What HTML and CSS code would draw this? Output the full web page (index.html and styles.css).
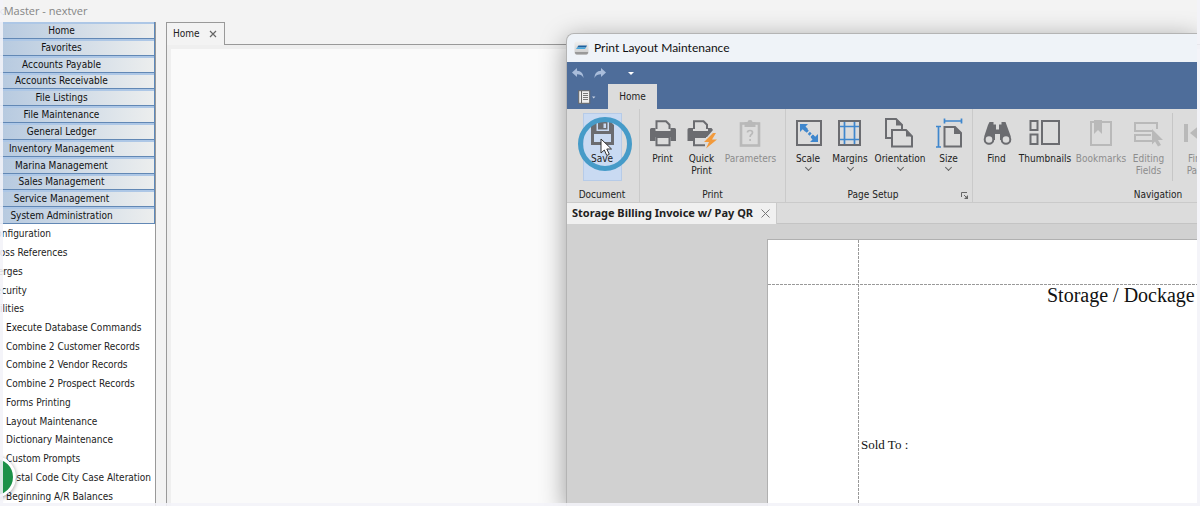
FILE: index.html
```html
<!DOCTYPE html>
<html lang="en">
<head>
<meta charset="utf-8">
<title>DockMaster - nextver</title>
<link rel="stylesheet" href="styles.css">
</head>
<body>
<div class="desktop">
  <header class="app-title">DockMaster - nextver</header>
  <div class="app-body">
    <aside class="sidebar">
      <nav class="menu">
        <button>Home</button><button>Favorites</button><button>Accounts Payable</button><button>Accounts Receivable</button><button>File Listings</button><button>File Maintenance</button><button>General Ledger</button><button>Inventory Management</button><button>Marina Management</button><button>Sales Management</button><button>Service Management</button><button>System Administration</button>
      </nav>
      <ul class="tree">
        <li>Configuration</li><li>Cross References</li><li>Merges</li><li>Security</li><li>Utilities</li>
        <li class="child">Execute Database Commands</li><li class="child">Combine 2 Customer Records</li><li class="child">Combine 2 Vendor Records</li><li class="child">Combine 2 Prospect Records</li><li class="child">Forms Printing</li><li class="child">Layout Maintenance</li><li class="child">Dictionary Maintenance</li><li class="child">Custom Prompts</li><li class="child">Postal Code City Case Alteration</li><li class="child">Beginning A/R Balances</li>
      </ul>
    </aside>
    <main class="workspace">
      <div class="tabs">
        <div class="tab">Home <button class="close" aria-label="Close Home"><svg width="8" height="8" viewBox="0 0 8 8"><path d="M1 1l6 6M7 1l-6 6" stroke="#666" stroke-width="1.2"/></svg></button></div>
        <div class="tab-rest"></div>
      </div>
      <div class="canvas"></div>
    </main>
  </div>
  <div class="badge"></div>

  <section class="window">
    <div class="win-title">
      <svg width="15" height="14" viewBox="0 0 15 14"><defs><linearGradient id="g" x2="0" y2="1"><stop offset="0" stop-color="#f0f0f0"/><stop offset="1" stop-color="#c9c9c9"/></linearGradient></defs><rect x=".5" y=".5" width="14" height="13" rx="2" fill="url(#g)"/><path d="M1 11h13v1q-.5 1.500-2 1.500H3q-1.500 0-2-1.500z" fill="#999"/><path d="M4.500 4.500h8.500l-1 2H3z" fill="#1d5f9e"/><path d="M3 6.500H12L11 8H2z" fill="#48a8dc"/></svg>
      <span>Print Layout Maintenance</span>
    </div>
    <div class="quick">
      <button aria-label="Undo"><svg width="12" height="10" viewBox="0 0 12 10"><path d="M5 0L0 4.500l5 4.500V6.300c3 0 5 .7 6.500 3.700C11.500 5.500 9 2.900 5 2.700z" fill="#a9bddb"/></svg></button>
      <button aria-label="Redo"><svg width="12" height="10" viewBox="0 0 12 10"><path d="M7 0l5 4.500L7 9V6.300C4 6.300 2 7 .5 10 .5 5.500 3 2.900 7 2.700z" fill="#a9bddb"/></svg></button>
      <button class="more" aria-label="Customize"><svg width="12" height="10" viewBox="0 0 12 10"><path d="M3 4h6L6 7z" fill="#fff"/></svg></button>
    </div>
    <div class="ribbon-tabs">
      <button class="file" aria-label="File"><svg width="18" height="14" viewBox="0 0 18 14"><rect x=".7" y=".7" width="11" height="12.600" fill="#eee" stroke="#666" stroke-width="1"/><path d="M3.500 1v12" stroke="#666"/><path d="M5 3.500h5M5 5.500h5M5 7.500h5M5 9.500h5" stroke="#777"/><path d="M14 6.500h3.400l-1.700 2z" fill="#c8d2e2"/></svg></button>
      <button class="ribbon-tab">Home</button>
    </div>
    <div class="ribbon">
      <div class="group document">
        <div class="items">
          <button class="item save"><svg viewBox="0 0 32 32"><path fill-rule="evenodd" d="M5 5h20l3 3v20H5zM8 17v8h17v-8zM10.500 5v9H23V5z" fill="#6b6c70"/><path fill-rule="evenodd" d="M12 5h9.500v7.500H12zM17.500 6.500v4.500h2.500V6.500z" fill="#6b6c70"/></svg>Save</button>
        </div>
        <div class="caption">Document</div>
      </div>
      <div class="group print">
        <div class="items">
          <button class="item"><svg viewBox="0 0 32 32"><path d="M9.500 12V4.200h9.500l3.500 3.500V12" fill="none" stroke="#6b6c70" stroke-width="2"/><path d="M4.500 11H8.500v3h15v-3h4q1.500 0 1.500 1.500V24H23.500v-4H8.500v4H3V12.500Q3 11 4.500 11z" fill="#6b6c70"/><path d="M9.500 20h13v8.300h-13z" fill="#dcdcdc" stroke="#6b6c70" stroke-width="2"/></svg>Print</button>
          <button class="item"><svg viewBox="0 0 32 32"><path d="M8 12V4.200h9.500L21 7.700V12" fill="none" stroke="#6b6c70" stroke-width="2"/><path d="M3 11h4v3h15v-3h3.500l1.500 2-6 7H7v4H1.500V12.500Q1.500 11 3 11z" fill="#6b6c70"/><path d="M20 20H8v8.300h11" fill="none" stroke="#6b6c70" stroke-width="2"/><path d="M27 16l-9 9h5l-3 6.500 11-9h-5l4-6.500z" fill="#f29a3c"/></svg>Quick<br>Print</button>
          <button class="item off" disabled><svg viewBox="0 0 32 32"><rect x="6" y="6.500" width="18" height="22" fill="none" stroke="#b9b9b9" stroke-width="2.600"/><path d="M9.500 5h3q0-2 2.500-2t2.500 2h3v5h-11z" fill="#b9b9b9"/><path d="M12.500 15.500q0-2 2.500-2t2.500 2q0 1.300-1.200 2T15.100 20M15.100 22v2" fill="none" stroke="#b9b9b9" stroke-width="1.700"/></svg>Parameters</button>
        </div>
        <div class="caption">Print</div>
      </div>
      <div class="group setup">
        <div class="items">
          <button class="item"><svg viewBox="0 0 32 32"><rect x="5" y="4" width="24" height="24" fill="none" stroke="#6b6c70" stroke-width="2"/><path d="M8 7h8l-2.500 2.500 2.500 2.500-2.800 2.800-2.500-2.600L8 15zM26 25h-8l2.500-2.500-1.800-2 2.500-2.700 2 2L26 17z" fill="#3f87cd"/><path d="M14 13l8 8" stroke="#3f87cd" stroke-width="3" stroke-dasharray="2.500 1.500"/></svg>Scale<i></i></button>
          <button class="item"><svg viewBox="0 0 32 32"><path d="M10.500 4v24M20.500 4v24M5 9.500h21M5 22.500h21" fill="none" stroke="#3f87cd" stroke-width="1.700"/><rect x="5" y="4" width="21" height="24" fill="none" stroke="#6b6c70" stroke-width="2"/></svg>Margins<i></i></button>
          <button class="item"><svg viewBox="0 0 32 32"><path d="M7 21H2V2h10l6 6v4" fill="none" stroke="#6b6c70" stroke-width="2"/><path d="M12 1.500l7 7h-7zM22 12.500l7 7h-7z" fill="#6b6c70"/><path d="M8 13h14l6 6.500v10H8z" fill="none" stroke="#6b6c70" stroke-width="2"/></svg>Orientation<i></i></button>
          <button class="item"><svg viewBox="0 0 32 32"><path d="M11.500 1.500v5M28.500 1.500v5M11.500 4h17M3 9.500h5M3 30h5M5.500 9.500V30" fill="none" stroke="#3f87cd" stroke-width="1.700"/><path d="M11.500 10h10.500l6 6v13.500H11.500z" fill="none" stroke="#6b6c70" stroke-width="2"/><path d="M21 9.500l7.500 7.500H21z" fill="#6b6c70"/></svg>Size<i></i></button>
        </div>
        <div class="caption">Page Setup<button class="launcher" aria-label="Page Setup options"><svg width="7" height="7" viewBox="0 0 7 7"><path d="M.5 5V.5H6" fill="none" stroke="#666"/><path d="M3 3l2 2" stroke="#666"/><path d="M7 3v4H3z" fill="#666"/></svg></button></div>
      </div>
      <div class="group navigation">
        <div class="items">
          <button class="item"><svg viewBox="0 0 32 32"><path d="M8.500 5h4v2.500H15v5h3v-5h2.500V5h4l5.500 15q-6-3-9 3h-2v-6h-5v6h-2q-3-6-9-3L7 8z" fill="#6b6c70"/><circle cx="8" cy="22.500" r="4.300" fill="#dcdcdc" stroke="#6b6c70" stroke-width="2"/><circle cx="25" cy="22.500" r="4.300" fill="#dcdcdc" stroke="#6b6c70" stroke-width="2"/></svg>Find</button>
          <button class="item"><svg viewBox="0 0 32 32"><path d="M1.500 4h7v9h-7zM1.500 17.500h7V27h-7zM13 4h17v23H13z" fill="none" stroke="#6b6c70" stroke-width="2"/></svg>Thumbnails</button>
          <button class="item off" disabled><svg viewBox="0 0 32 32"><rect x="6" y="5" width="20" height="23" fill="none" stroke="#b9b9b9" stroke-width="2"/><path d="M9 3h8v14l-4-4-4 4z" fill="#b9b9b9"/></svg>Bookmarks</button>
          <button class="item off" disabled><svg viewBox="0 0 32 32"><path d="M19 14H2V6h22v6M19 24H2v-6h16" fill="none" stroke="#b9b9b9" stroke-width="2"/><path d="M19 12l11 11h-5l3 5-3 1.500-3-5-3 3z" fill="#b9b9b9"/></svg>Editing<br>Fields</button>
          <span class="divider"></span>
          <button class="item off" disabled><svg viewBox="0 0 32 32"><path d="M2 7h4v18H2zM8 16l11-9v18z" fill="#b9b9b9"/></svg>First<br>Page</button>
        </div>
        <div class="caption">Navigation</div>
      </div>
    </div>
    <div class="doc-tabs">
      <div class="doc-tab">Storage Billing Invoice w/ Pay QR <button class="close" aria-label="Close document"><svg width="9" height="9" viewBox="0 0 9 9"><path d="M.5.5l8 8M8.500.5l-8 8" stroke="#777"/></svg></button></div>
    </div>
    <div class="doc-area">
      <article class="page">
        <h1>Storage / Dockage Invoice</h1>
        <p>Sold To :</p>
      </article>
    </div>
    <div class="click-ring"></div>
    <svg class="pointer" width="13" height="19" viewBox="0 0 13 19"><path d="M1 1v14l3.300-3 2.500 5.500 2.500-1.200L6.800 11H11.500z" fill="#fff" stroke="#333"/></svg>
  </section>
</div>
</body>
</html>
```
FILE: styles.css
```css
* { box-sizing: border-box; }

body {
  margin: 0;
  font: 10px/12px "DejaVu Sans Condensed", "Noto Sans", sans-serif;
  color: #222;
}

button {
  border: 0;
  padding: 0;
  background: none;
  font: inherit;
  color: inherit;
}

svg { display: block; }

.desktop {
  position: relative;
  display: flex;
  flex-direction: column;
  height: 100vh;
  overflow: hidden;
  background: #f3f3f3;
}

/* translucent frame round the whole desktop */
.desktop::after {
  content: "";
  position: absolute;
  inset: 0;
  border: 3px solid rgba(243, 243, 248, 0.88);
  border-top: 0;
  pointer-events: none;
}

.app-title {
  height: 22px;
  margin-left: -22px;
  font: 11px/22px "Open Sans", sans-serif;
  color: #858585;
}

.app-body { display: flex; flex: 1; min-height: 0; }

.sidebar {
  flex: none;
  width: 190px;
  margin-left: -34px;
  border-right: 1px solid #999;
  background: #fff;
}

.menu {
  display: grid;
  grid-template-rows: repeat(12, 1fr);
  height: 202px;
  border-right: 1px solid #5d89bb;
}

.menu button {
  padding-left: 3px;
  border-top: 2px solid #adc7e6;
  border-bottom: 1px solid #6288b5;
  background: linear-gradient(90deg, #b4c8df 15%, #eceeee);
  line-height: 12px;
  color: #111;
}

.tree {
  display: grid;
  grid-template-rows: repeat(15, 1fr);
  align-items: center;
  height: 281px;
  margin: 1px 0 0;
  padding: 0 0 0 24px;
  list-style: none;
  white-space: nowrap;
}

.tree .child { padding-left: 16px; }

.workspace {
  display: flex;
  flex-direction: column;
  flex: 1;
  margin-left: 10px;
}

.tabs { display: flex; height: 23px; }

.tab {
  display: flex;
  align-items: center;
  gap: 9px;
  width: 59px;
  padding-left: 6px;
  border: 1px solid #999;
  border-bottom: 0;
}

.tab-rest { flex: 1; border-bottom: 1px solid #999; }

.canvas {
  flex: 1;
  border-left: 1px solid #999;
  background: #fafafa;
  box-shadow: inset 4px 4px #efefef;
}

.badge {
  position: absolute;
  left: -26px;
  bottom: 8px;
  width: 42px;
  height: 42px;
  border: 3px solid #fff;
  border-radius: 50%;
  background: #1b9148;
  box-shadow: 0 1px 4px rgba(0, 0, 0, 0.4);
}

.window {
  position: absolute;
  inset: 33px 3px 0 566px;
  display: flex;
  flex-direction: column;
  border: 1px solid #b4b4b4;
  border-right: 0;
  border-bottom: 0;
  border-radius: 8px 0 0 0;
  background: #d1d1d1;
  box-shadow: 0 6px 26px rgba(0, 0, 0, 0.4);
  clip-path: inset(-40px 0 0 -40px);
}

.win-title {
  display: flex;
  align-items: center;
  gap: 5px;
  height: 28px;
  padding-left: 7px;
  border-radius: 7px 0 0 0;
  background: #eff3f8;
  font: 12px/16px "Lato", sans-serif;
  color: #111;
}

.quick {
  display: flex;
  gap: 10px;
  align-items: center;
  height: 22px;
  padding-left: 5px;
  background: #4e6d9a;
}

.quick .more { margin-left: 9px; }

.ribbon-tabs {
  display: flex;
  height: 25px;
  background: #4e6d9a;
}

.file { width: 41px; padding-left: 11px; }

.ribbon-tab { width: 49px; background: #dcdcdc; }

.ribbon {
  display: flex;
  height: 93px;
  overflow: hidden;
  background: #dcdcdc;
}

.group {
  display: flex;
  flex: none;
  flex-direction: column;
  justify-content: space-between;
  padding: 4px 3px 1px;
  border-right: 1px solid #cacaca;
}

.document { width: 73px; padding-left: 0; padding-right: 2px; }
.print { width: 146px; }
.setup { width: 187px; padding-left: 1px; }
.navigation { width: 371px; }

.items { display: flex; height: 68px; }

.document .items { justify-content: center; }

.item {
  display: flex;
  flex: none;
  flex-direction: column;
  align-items: center;
  width: 39px;
  padding-top: 4px;
  text-align: center;
  white-space: nowrap;
}

.item svg { width: 32px; height: 32px; margin-bottom: 4px; }

.item i {
  width: 5px;
  height: 5px;
  border: solid #666;
  border-width: 0 1px 1px 0;
  transform: rotate(45deg);
}

.off { color: #8d8d8d; }

.save { background: #c9daf2; box-shadow: inset 0 0 0 1px #b6cbe8; }

.print .item:nth-child(3) { width: 59px; }
.setup .item:nth-child(1), .setup .item:nth-child(2) { width: 42px; }
.setup .item:nth-child(3) { width: 58px; }
.navigation .item:nth-child(1) { width: 41px; }
.navigation .item:nth-child(2), .navigation .item:nth-child(3) { width: 56px; }

.divider { width: 1px; margin: 0 5px 0 4px; background: #c6c6c6; }

.caption { position: relative; text-align: center; }

.launcher { position: absolute; right: 1px; top: 3px; }

.setup .caption { padding-right: 10px; }

.doc-tabs {
  display: flex;
  height: 22px;
  border-top: 1px solid #cacaca;
  border-bottom: 1px solid #c4c4c4;
  background: #dcdcdc;
}

.doc-tab {
  display: flex;
  align-items: center;
  gap: 8px;
  height: 21px;
  padding: 0 6px 1px 5px;
  border-right: 1px solid #cacaca;
  background: #f0f0f0;
  font: bold 11px/16px "Noto Sans", sans-serif;
  white-space: nowrap;
}

.doc-area {
  display: flex;
  flex: 1;
  padding: 15px 0 0 200px;
  min-height: 0;
}

.page {
  flex: 1;
  overflow: hidden;
  padding: 44px 0 0 93px;
  border: solid #b0b0b0;
  border-width: 1px 0 0 1px;
  background:
    repeating-linear-gradient(90deg, #999 0 3px, #fff 3px 4px) 0 44px / 100% 1px no-repeat,
    repeating-linear-gradient(#999 0 3px, #fff 3px 4px) 90px 0 / 1px 100% no-repeat,
    #fff;
  font-family: "Liberation Serif", serif;
  color: #111;
  white-space: nowrap;
}

.page h1 {
  margin: 0 0 132px;
  padding-left: 186px;
  font-size: 20px;
  line-height: 22px;
  font-weight: normal;
}

.page p { margin: 0; font-size: 13px; line-height: 14px; }

.click-ring {
  position: absolute;
  left: 11px;
  top: 83px;
  width: 54px;
  height: 54px;
  border: 5px solid #469bc8;
  border-radius: 50%;
}

.pointer { position: absolute; left: 33px; top: 104px; }
```
